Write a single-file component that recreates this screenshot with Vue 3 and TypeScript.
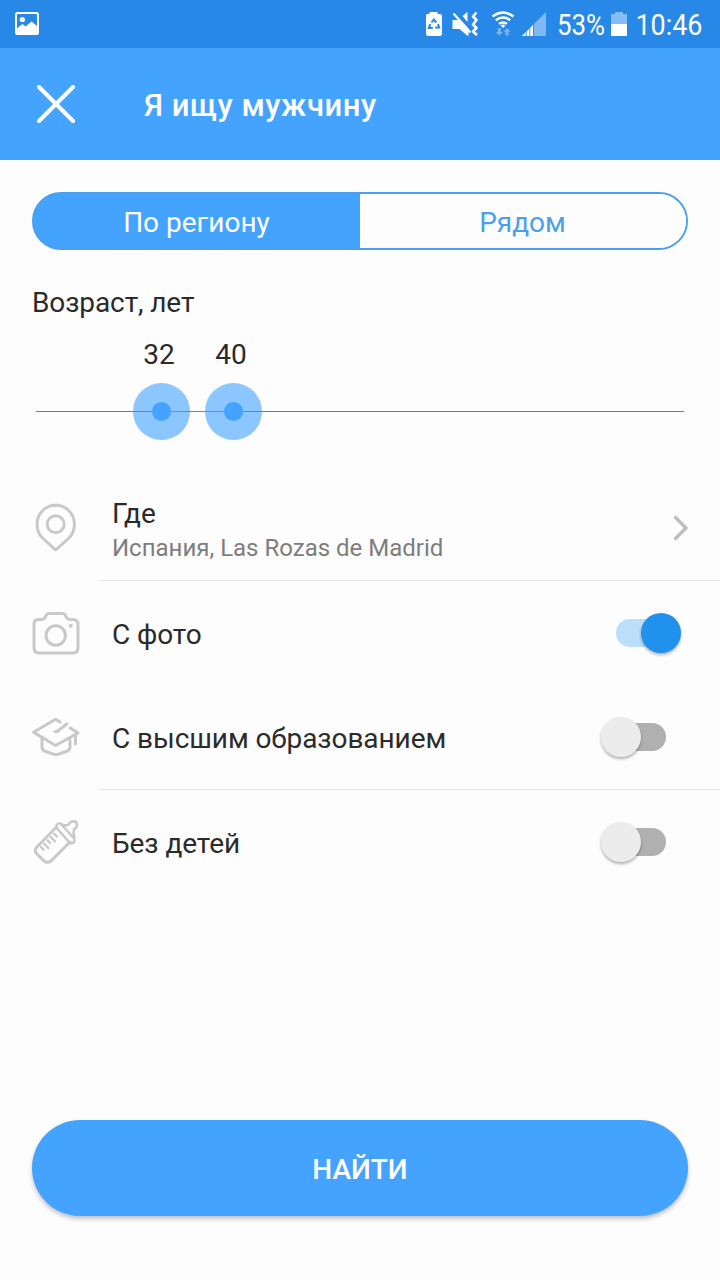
<script setup lang="ts">
import { computed, ref } from 'vue'

interface ToggleRow {
  id: 'photo' | 'education' | 'children'
  label: string
  on: boolean
  divider: boolean
}

const region = ref(true)
const ages = ref([32, 40])
const minAge = 18
const pxPerYear = 9
const thumbs = computed(() =>
  ages.value.map((age) => ({ age, left: (age - minAge) * pxPerYear - 0.5 })),
)

const rows = ref<ToggleRow[]>([
  { id: 'photo', label: 'С фото', on: true, divider: false },
  { id: 'education', label: 'С высшим образованием', on: false, divider: true },
  { id: 'children', label: 'Без детей', on: false, divider: false },
])
</script>

<template>
  <main class="screen">
    <div class="status">
      <svg class="picture" width="24" height="23" viewBox="0 0 24 23">
        <rect x="1" y="1" width="22" height="21" rx="1.5" fill="none" stroke="#fff" stroke-width="2" />
        <circle cx="7.3" cy="7.5" r="2.6" fill="#fff" />
        <path d="M1 17 7.500 12 10.500 14.500 16.500 9.500 19 11.500 23 15V22H1Z" fill="#fff" />
      </svg>
      <svg width="150" height="48" viewBox="410 0 150 48">
        <path d="M427 14h2.5v-2h8v2h2.5q2 0 2 2v18q0 2-2 2h-12q-2 0-2-2V16q0-2 1-2Z" fill="#fff" />
        <g fill="none" stroke="#2788e7" stroke-width="2">
          <path d="M431.5 22.5 433.8 19.5 436.3 22.5M438 24l1.2 3.5h-4M432.8 28h-4l1.5-4" />
        </g>
        <path d="M452.500 20h5l2-2 9 9v9l-2-1-7-6h-7Z" fill="#fff" />
        <path d="M462.500 16 467.500 12v10Z" fill="#fff" />
        <path d="M455 12.500 473 32" stroke="#2788e7" stroke-width="2" />
        <path d="M453.500 13.500 470.500 32.500" stroke="#fff" stroke-width="2.2" />
        <path d="m476.500 12.500-3.500 4 3.500 3.500-3.500 4.500 3.500 3.500-3.500 3.500 4 3.500" fill="none" stroke="#fff" stroke-width="2.600" stroke-linejoin="round" />
        <g fill="none" stroke="#fff" stroke-width="2.5">
          <path d="M492.5 16.5q10.500-8 21 0M495.800 20.300q7.200-5.500 14.400 0M499 23.800q4-2.800 8 0" />
        </g>
        <path d="M500.500 25.500q2.500-1.800 5 0L503 28Z" fill="#fff" />
        <path d="M497.800 28h3v4h2l-3.500 3.700-3.500-3.700h2ZM505.500 35.500h3v-4h2L507 28l-3.500 3.500h2Z" fill="#78b6f3" />
        <path d="M522 36 546 12v24Z" fill="#7fb9f3" />
        <path d="M522 36 533 25v11Z" fill="#fff" />
        <path d="M526.300 30v6M529.800 27v9M533.500 24v12" stroke="#2788e7" stroke-width=".8" />
      </svg>
      <svg width="160" height="48" viewBox="560 0 160 48" class="clock">
        <text x="557" y="35" textLength="48" lengthAdjust="spacingAndGlyphs">53%</text>
        <path d="M611 14h4v-2h8v2h4v10h-16Z" fill="#85bdf5" />
        <path d="M611 24h16v12h-16Z" fill="#fff" />
        <text x="635.500" y="35" textLength="67" lengthAdjust="spacingAndGlyphs">10:46</text>
      </svg>
    </div>

    <header class="bar">
      <svg width="38" height="38" viewBox="0 0 38 38">
        <path d="M2 2 36 36M36 2 2 36" stroke="#fff" stroke-width="4" stroke-linecap="round" />
      </svg>
      <h1>Я ищу мужчину</h1>
    </header>

    <div class="segments">
      <button :class="{ active: region }" @click="region = true">По региону</button>
      <button :class="{ active: !region }" @click="region = false">Рядом</button>
    </div>

    <section class="age">
      <h2>Возраст, лет</h2>
      <div class="slider">
        <div class="track"></div>
        <div v-for="t in thumbs" :key="t.age" class="thumb" :style="{ left: t.left + 'px' }">
          <span class="value">{{ t.age }}</span>
        </div>
        <div class="thread"></div>
        <div v-for="t in thumbs" :key="'d' + t.age" class="dot" :style="{ left: t.left + 'px' }"></div>
      </div>
    </section>

    <section class="where">
      <div class="icon">
        <svg width="48" height="52" viewBox="32 502 48 52">
          <path d="M55.700 550 42 537.500C37.500 533 37 528 37 524a18.700 18.700 0 0 1 37.400 0C74.400 529 73 534 69 538Z" />
          <circle cx="55.700" cy="524.200" r="8.500" />
        </svg>
      </div>
      <div class="place">
        <div class="title">Где</div>
        <div class="sub">Испания, Las Rozas de Madrid</div>
      </div>
      <svg class="chevron" width="16" height="26" viewBox="0 0 16 26">
        <path d="M2.500 2.500 13 13 2.500 23.500" fill="none" stroke="#bdbdbd" stroke-width="3.200" stroke-linecap="round" />
      </svg>
    </section>

    <section v-for="row in rows" :key="row.id" class="row" :class="[row.id, { divider: row.divider }]">
      <div class="icon">
        <svg v-if="row.id === 'photo'" width="50" height="46" viewBox="31 610 50 46">
          <path d="M38 619.500h4q2 0 3-2l1-2q1-2 3-2h13.500q2 0 3 2l1 2q1 2 3 2h3.500q5 0 5 5v23.500q0 5-5 5H39q-5 0-5-5v-23.500q0-5 4-5Z" />
          <circle cx="55.700" cy="635.500" r="9.700" />
          <circle cx="70.800" cy="625.700" r="2" class="fill" />
        </svg>
        <svg v-else-if="row.id === 'education'" width="50" height="46" viewBox="31 715 50 46">
          <path d="M60 722 55.500 719.200 33.500 732.200 55.500 745.500 78 733 70.300 728M66.800 724 57 731.500" />
          <ellipse cx="56.300" cy="731.600" rx="3" ry="1.500" class="fill" />
          <path d="M42 738v10q1 3 5 4l7 2.300q2 .6 4 0l7-2.300q4-1 5-4v-8M75.500 735v9" />
        </svg>
        <svg v-else width="50" height="48" viewBox="31 818 50 48">
          <path d="M56 827.500 36.500 847.500Q34 850.500 36.500 853.500L43.500 860.500Q47.500 864 51.500 860.500L70 842" />
          <path d="M57 824.500Q59.500 822 62 825L74 838.500Q75.500 841.500 73 843T69 842L57.500 829Q55.500 826.500 57 824.500Z" stroke-width="2.400" />
          <path d="M61.500 824Q65.500 826.500 68.500 824.500L71 821.800Q74 820.800 76.500 822.300Q77.500 825 76.300 827.300L74 829.500Q72.800 833 74.500 837" stroke-width="2.600" />
          <path d="M41 847 43.500 849.800M44.300 843.700 48.300 848M47.600 840.400 50 843M50.900 837.100 55 841.400M54.200 833.800 56.700 836.500" stroke-width="2.400" />
        </svg>
      </div>
      <div class="label">{{ row.label }}</div>
      <button class="switch" :class="{ on: row.on }" :aria-label="row.label" @click="row.on = !row.on">
        <span class="knob"></span>
      </button>
    </section>

    <button class="find">НАЙТИ</button>
  </main>
</template>

<style>
body {
  margin: 0;
  background: #fdfdfe;
}
</style>

<style scoped>
* {
  box-sizing: border-box;
}
.screen {
  width: 720px;
  height: 1280px;
  display: flex;
  flex-direction: column;
  overflow: hidden;
  background: #fdfdfe;
  color: #2b2b2b;
  font: 28px/36px Roboto, sans-serif;
}
button {
  border: 0;
  padding: 0;
  font: inherit;
}
.status {
  height: 48px;
  flex: none;
  display: flex;
  background: #2788e7;
}
.picture {
  margin: 12px auto 0 15px;
}
.clock {
  overflow: visible;
  fill: #fff;
  font-size: 30px;
}
.bar {
  height: 112px;
  flex: none;
  display: flex;
  align-items: center;
  padding-left: 37px;
  gap: 69px;
  background: #44a3ff;
}
h1 {
  margin: 4px 0 0;
  color: #fff;
  font-size: 31px;
  font-weight: 500;
  letter-spacing: 0.55px;
}
.segments {
  flex: none;
  display: flex;
  height: 58px;
  margin: 32px 32px 0;
  border: 2px solid #4b9fec;
  border-radius: 29px;
  overflow: hidden;
  background: linear-gradient(90deg, #44a3ff 50%, #fdfdfe 50%) border-box;
}
.segments button {
  flex: 1 1 0;
  background: #fdfdfe;
  color: #4b9fec;
  padding: 3px 1px 0 0;
}
.segments .active {
  background: #44a3ff;
  color: #fff;
}
.age {
  flex: none;
  height: 239px;
  padding: 35px 36px 0;
}
h2 {
  margin: 0 0 0 -4px;
  font-size: 28px;
  line-height: 36px;
  font-weight: 400;
  letter-spacing: -0.1px;
}
.slider {
  position: relative;
  height: 120px;
}
.track {
  position: absolute;
  left: 0;
  right: 0;
  top: 90px;
  height: 1px;
  background: #77777d;
}
.thumb {
  position: absolute;
  top: 62px;
  width: 57px;
  height: 57px;
  margin-left: -28.5px;
  border-radius: 50%;
  background: #8cc6ff;
}
.value {
  position: absolute;
  left: 0;
  width: 52px;
  top: -46px;
  text-align: center;
}
.thread {
  position: absolute;
  left: 97px;
  width: 129px;
  top: 90px;
  height: 1px;
  background: linear-gradient(90deg, #6386a9 38px, #b070ae 38px 56px, #e8507c 56px 73px, #b070ae 73px 91px, #6386a9 91px);
}
.dot {
  position: absolute;
  top: 81px;
  width: 19px;
  height: 19px;
  margin-left: -9.5px;
  border-radius: 50%;
  background: #44a3ff;
}
.where {
  position: relative;
  flex: none;
  height: 92px;
  display: flex;
  align-items: flex-start;
  padding: 7px 31px 0 32px;
}
.icon {
  width: 80px;
  flex: none;
  display: flex;
  align-items: center;
}
.icon svg {
  fill: none;
  stroke: #c9c9c9;
  stroke-width: 3;
  stroke-linejoin: round;
  stroke-linecap: round;
}
.where .icon {
  padding-top: 6px;
}
.icon .fill {
  fill: #c9c9c9;
  stroke: none;
}
.place {
  flex: 1;
}
.sub {
  color: #7d7d7d;
  font-size: 24px;
  line-height: 32px;
}
.chevron {
  margin-top: 19px;
}
.row {
  position: relative;
  flex: none;
  height: 104px;
  display: flex;
  align-items: center;
  padding: 0 39px 0 32px;
}
.row .icon {
  margin-left: -1px;
  width: 81px;
}
.where::after,
.divider::after {
  content: '';
  position: absolute;
  left: 100px;
  right: 0;
  bottom: 0;
  height: 1px;
  background: #e2e2e4;
}
.divider {
  height: 105px;
}
.label {
  flex: 1;
  padding-top: 3px;
  letter-spacing: -0.07px;
}
.divider .label {
  padding-top: 2px;
}
.switch {
  position: relative;
  flex: none;
  width: 50px;
  height: 28px;
  margin: 0 15px 1px 0;
  border-radius: 14px;
  background: #b0b0b0;
}
.knob {
  position: absolute;
  left: -15px;
  top: -6px;
  width: 40px;
  height: 40px;
  border-radius: 50%;
  background: #ececec;
  box-shadow: 0 2px 3px rgba(0, 0, 0, 0.3);
}
.switch.on {
  background: #bbdefb;
}
.switch.on .knob {
  left: 25px;
  background: #2092ee;
}
.find {
  flex: none;
  height: 96px;
  margin: auto 32px 64px;
  border-radius: 48px;
  background: #44a3ff;
  color: #fff;
  font-weight: 500;
  padding-top: 3px;
  box-shadow: 0 3px 4px rgba(40, 35, 65, 0.28);
}
</style>
